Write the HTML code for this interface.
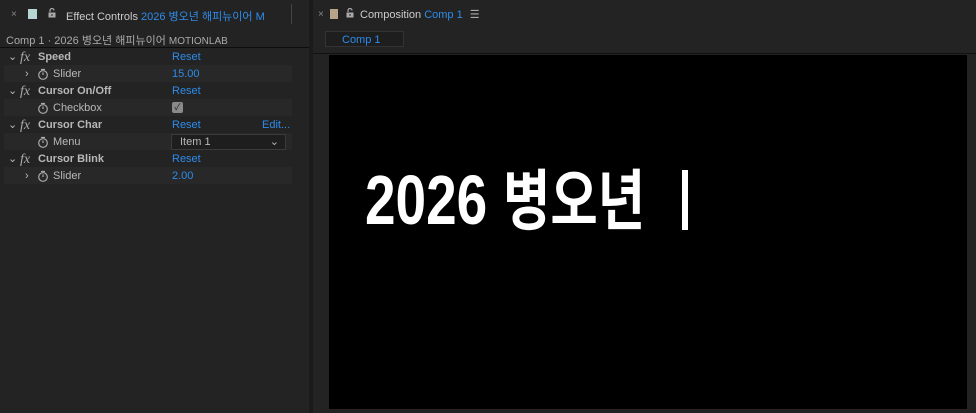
<!DOCTYPE html><html><head><meta charset="utf-8"><style>
body{margin:0;width:976px;height:413px;background:#1b1b1b;font-family:"Liberation Sans","Noto Sans CJK KR",sans-serif;overflow:hidden;position:relative;font-size:11px;color:#b8b8b8}
.a{position:absolute}
.blue{color:#2d8ceb}
.row{position:absolute;left:4px;width:288px;height:17px;line-height:19px}
.e{background:#232323}.s{background:#282828}
.sw{position:absolute;left:33px;top:3px}
</style></head><body>
<svg width="0" height="0" style="position:absolute"><defs>
<symbol id="sw" viewBox="0 0 12 12"><circle cx="6" cy="7" r="4.3" fill="none" stroke="#aaa" stroke-width="1.2"/><path d="M4 1.5h4M6 7V4.5" stroke="#aaa" stroke-width="1.2"/></symbol>
<symbol id="lk" viewBox="0 0 10 10"><path d="M3 4V2.5a2 2 0 0 1 4 0" fill="none" stroke="#aaa" stroke-width="1.2"/><rect x="1.5" y="4.5" width="7" height="5" fill="#aaa"/><rect x="4.5" y="6" width="1" height="2" fill="#222"/></symbol>
</defs></svg>
<div class="a" style="left:0;top:0;width:309px;height:413px;background:#232323"></div>
<div class="a" style="left:11px;top:9px;font-size:10px;color:#888">×</div>
<div class="a" style="left:28px;top:9px;width:9px;height:10px;background:#b7d6d3"></div>
<svg class="a" style="left:47px;top:8px" width="10" height="10"><use href="#lk"/></svg>
<div class="a" style="left:66px;top:8px;color:#ccc;white-space:nowrap;width:224px;overflow:hidden">Effect Controls <span class="blue">2026 병오년 해피뉴이어 M</span></div>
<div class="a" style="left:291px;top:4px;width:1px;height:20px;background:#444"></div>
<div class="a" style="left:6px;top:32px;color:#aaa;white-space:nowrap">Comp 1 · 2026 병오년 해피뉴이어 <span style="font-size:10px">MOTIONLAB</span></div>
<div class="a" style="left:0;top:47px;width:309px;height:1px;background:#0d0d0d"></div>
<div class="row e" style="top:48px"><span class="a" style="left:4px">⌄</span><i class="a" style="left:16px;font-family:'Liberation Serif';font-size:14px;color:#aaa">fx</i><b class="a" style="left:34px">Speed</b><span class="a blue" style="left:168px">Reset</span></div>
<div class="row s" style="top:65px"><span class="a" style="left:21px">›</span><svg class="sw" width="12" height="12"><use href="#sw"/></svg><span class="a" style="left:49px">Slider</span><span class="a blue" style="left:168px">15.00</span></div>
<div class="row e" style="top:82px"><span class="a" style="left:4px">⌄</span><i class="a" style="left:16px;font-family:'Liberation Serif';font-size:14px;color:#aaa">fx</i><b class="a" style="left:34px">Cursor On/Off</b><span class="a blue" style="left:168px">Reset</span></div>
<div class="row s" style="top:99px"><svg class="sw" width="12" height="12"><use href="#sw"/></svg><span class="a" style="left:49px">Checkbox</span><span class="a" style="left:168px;top:3px;width:11px;height:11px;background:#8a8a8a;border-radius:2px;color:#222;font-size:9px;line-height:11px;text-align:center">✓</span></div>
<div class="row e" style="top:116px"><span class="a" style="left:4px">⌄</span><i class="a" style="left:16px;font-family:'Liberation Serif';font-size:14px;color:#aaa">fx</i><b class="a" style="left:34px">Cursor Char</b><span class="a blue" style="left:168px">Reset</span><span class="a blue" style="left:258px">Edit...</span></div>
<div class="row s" style="top:133px"><svg class="sw" width="12" height="12"><use href="#sw"/></svg><span class="a" style="left:49px">Menu</span><div class="a" style="left:167px;top:1px;width:113px;height:14px;background:#1e1e1e;border:1px solid #3a3a3a;line-height:14px"><span style="margin-left:8px">Item 1</span><span class="a" style="right:6px">⌄</span></div></div>
<div class="row e" style="top:150px"><span class="a" style="left:4px">⌄</span><i class="a" style="left:16px;font-family:'Liberation Serif';font-size:14px;color:#aaa">fx</i><b class="a" style="left:34px">Cursor Blink</b><span class="a blue" style="left:168px">Reset</span></div>
<div class="row s" style="top:167px"><span class="a" style="left:21px">›</span><svg class="sw" width="12" height="12"><use href="#sw"/></svg><span class="a" style="left:49px">Slider</span><span class="a blue" style="left:168px">2.00</span></div>

<div class="a" style="left:313px;top:0;width:663px;height:413px;background:#232323"></div>
<div class="a" style="left:318px;top:9px;font-size:10px;color:#888">×</div>
<div class="a" style="left:330px;top:9px;width:8px;height:10px;background:#b5a48a"></div>
<svg class="a" style="left:345px;top:8px" width="10" height="10"><use href="#lk"/></svg>
<div class="a" style="left:360px;top:8px;color:#ccc">Composition <span class="blue">Comp 1</span> <span style="color:#aaa;margin-left:4px">☰</span></div>
<div class="a" style="left:325px;top:31px;height:16px;background:#1e1e1e;border:1px solid #333;color:#2d8ceb;line-height:16px;padding-left:16px;width:79px;box-sizing:border-box">Comp 1</div>
<div class="a" style="left:313px;top:53px;width:663px;height:1px;background:#111"></div>
<div class="a" style="left:329px;top:55px;width:638px;height:354px;background:#000"></div>
<div class="a" style="left:365px;top:165px;color:#fff;font-weight:bold;font-size:70px;line-height:70px;white-space:nowrap;transform:scaleX(0.785);transform-origin:0 0;font-family:'Liberation Sans',sans-serif">2026</div>
<div class="a" style="left:503px;top:163px;color:#fff;font-weight:bold;font-size:66px;line-height:66px;white-space:nowrap;transform:scaleX(0.78);transform-origin:0 0;font-family:'Noto Sans CJK KR',sans-serif">병오년</div>
<div class="a" style="left:682px;top:170px;width:6px;height:60px;background:#fff"></div>
</body></html>
